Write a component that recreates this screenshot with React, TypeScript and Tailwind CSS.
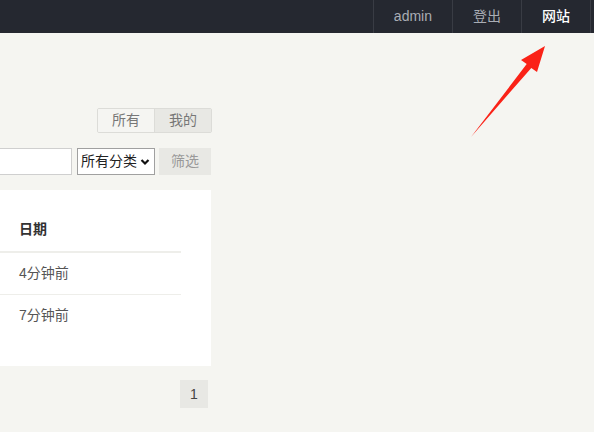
import React from "react";

const font = { fontFamily: '"Liberation Sans", "Noto Sans CJK SC", sans-serif' };

export default function App() {
  return (
    <div className="relative w-[594px] h-[432px] overflow-hidden bg-[#f5f5f1] text-[14px]" style={font}>
      {/* Top bar */}
      <div className="h-[33px] bg-[#252830] flex justify-end pr-[3px]">
        <div className="flex h-full border-r border-[#393c44]">
          <div className="px-5 h-full flex items-center border-l border-[#393c44] text-[#a9adb4]">admin</div>
          <div className="px-5 h-full flex items-center border-l border-[#393c44] text-[#a9adb4]">登出</div>
          <div className="px-5 h-full flex items-center border-l border-[#393c44] text-white font-medium">网站</div>
        </div>
      </div>

      {/* Main column (left part cropped off) */}
      <div className="ml-[-100px] w-[312px] pt-[75px]">
        {/* tabs */}
        <div className="flex justify-end">
          <div className="flex h-[25px] border border-[#dcdcd8] rounded-[2px] overflow-hidden text-[#777]">
            <div className="w-[56px] flex items-center justify-center bg-[#f5f5f2]">所有</div>
            <div className="w-[57px] flex items-center justify-center bg-[#e8e8e4] border-l border-[#dcdcd8]">我的</div>
          </div>
        </div>

        {/* filter row */}
        <div className="flex justify-end items-center mt-[15px] pr-[1px]">
          <div className="w-[172px] h-[27px] bg-white border border-[#cfcfcf]"></div>
          <div className="ml-[5px] w-[78px] h-[27px] bg-white border border-[#a0a0a0] flex items-center pl-[3px] text-[#222]">
            <span>所有分类</span>
            <svg width="10" height="8" viewBox="0 0 10 8" className="ml-[3px]">
              <path d="M1.5 2 L5 5.5 L8.5 2" fill="none" stroke="#111" strokeWidth="2.2" />
            </svg>
          </div>
          <div className="ml-[4px] w-[52px] h-[27px] bg-[#e8e8e4] text-[#999] flex items-center justify-center">筛选</div>
        </div>

        {/* panel */}
        <div className="mt-[15px] mr-[1px] bg-white pt-[20px] pb-[30px] pr-[30px]">
          <div className="border-b-2 border-[#eeeeea] h-[43px] flex items-center pl-[119px] pb-[2px] font-bold text-[#333]">日期</div>
          <div className="border-b border-[#eeeeea] h-[42px] flex items-center pl-[119px] text-[#555]">4分钟前</div>
          <div className="h-[41px] flex items-center pl-[119px] text-[#555]">7分钟前</div>
        </div>

        {/* pagination */}
        <div className="flex justify-end mt-[14px] pr-[4px]">
          <div className="w-[28px] h-[28px] bg-[#e8e8e4] flex items-center justify-center text-[#444]">1</div>
        </div>
      </div>

      {/* red annotation arrow */}
      <svg className="absolute left-0 top-0 pointer-events-none" width="594" height="432">
        <polygon points="471,137 526.7,64.1 521,60 545,46 537,72 531.3,67.9" fill="#fa2217" />
      </svg>
    </div>
  );
}
